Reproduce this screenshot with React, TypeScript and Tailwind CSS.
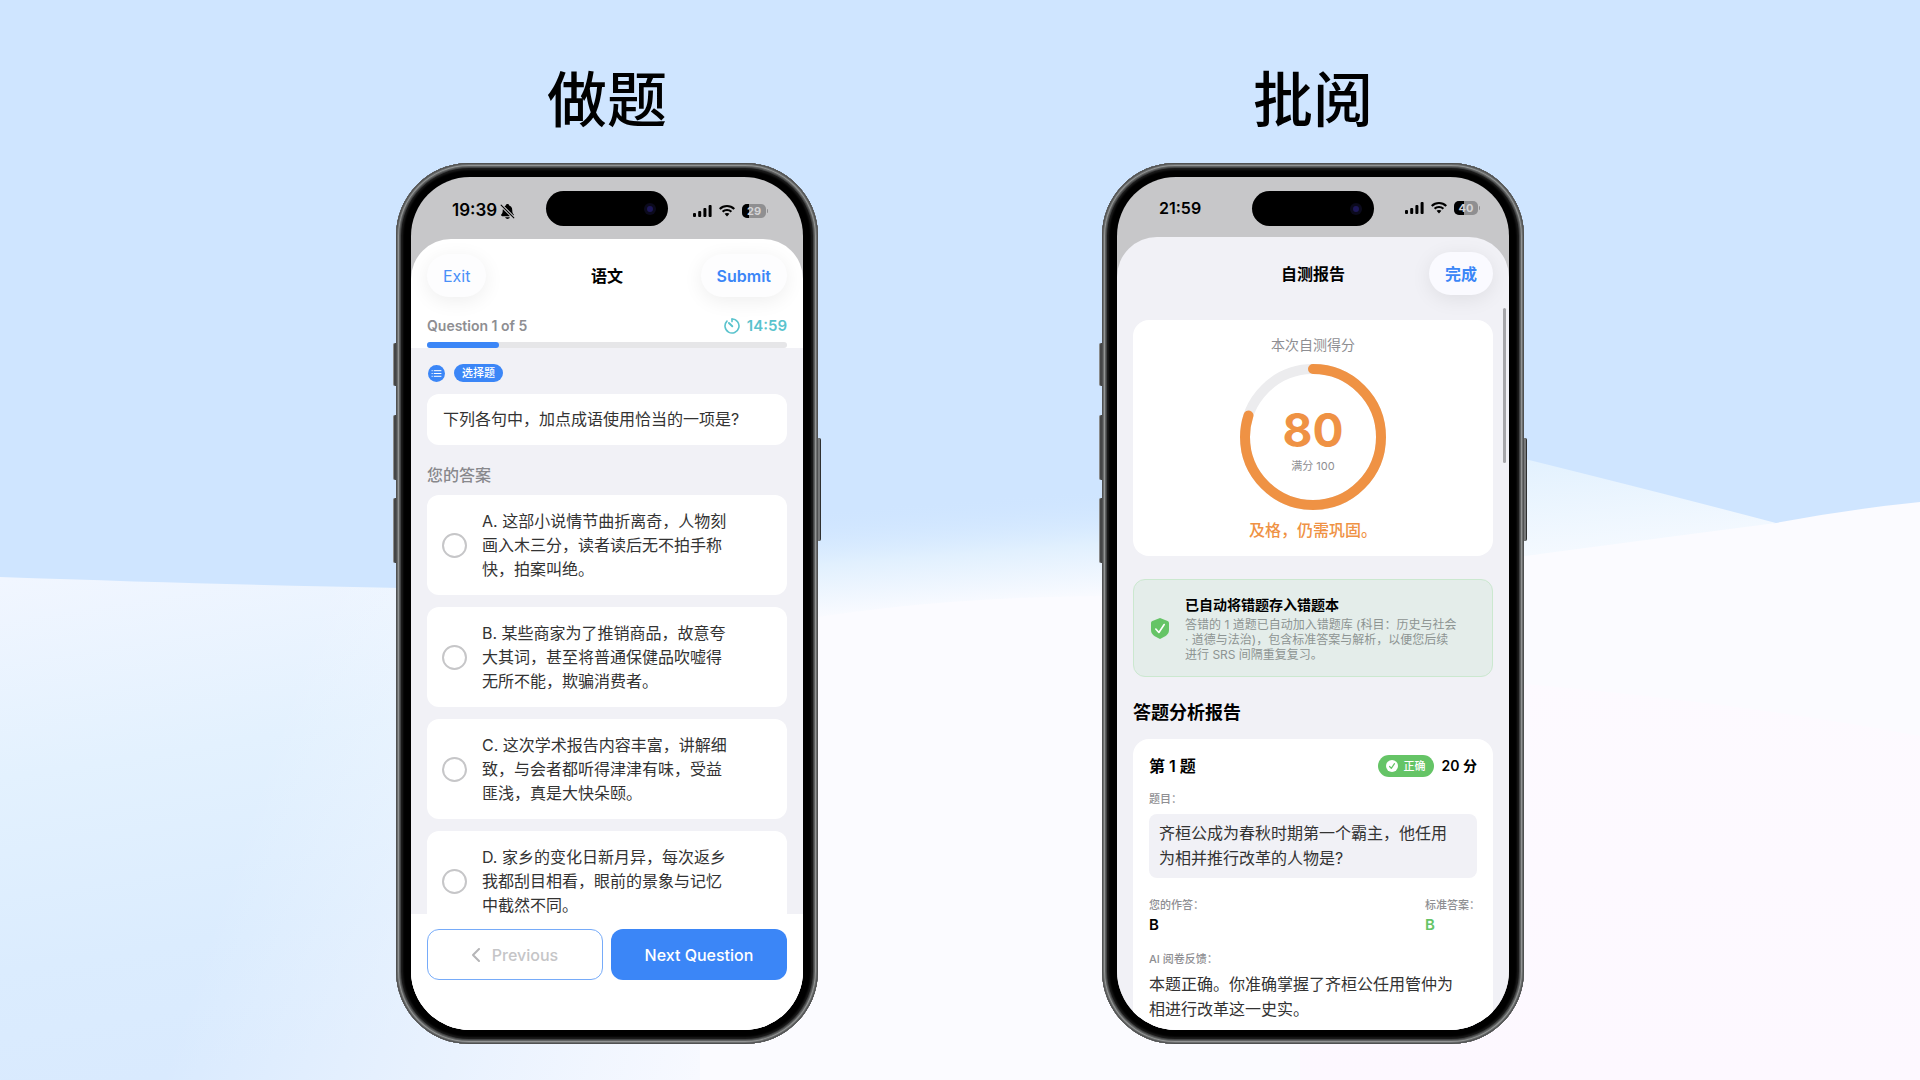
/**
 * Feature showcase
 *
 * Two phone mockups side by side: the quiz screen and the grading report.
 */

import type {ReactNode} from 'react';

import {clsx} from 'clsx';
import {IoNotificationsOff} from 'react-icons/io5';

/**
 * Answer option of a multiple choice question
 */
type Option = {
  readonly id: string;
  readonly text: string;
};

const QUESTION = '下列各句中，加点成语使用恰当的一项是?';

const OPTIONS: Option[] = [
  {id: 'A', text: '这部小说情节曲折离奇，人物刻画入木三分，读者读后无不拍手称快，拍案叫绝。'},
  {id: 'B', text: '某些商家为了推销商品，故意夸大其词，甚至将普通保健品吹嘘得无所不能，欺骗消费者。'},
  {id: 'C', text: '这次学术报告内容丰富，讲解细致，与会者都听得津津有味，受益匪浅，真是大快朵颐。'},
  {id: 'D', text: '家乡的变化日新月异，每次返乡我都刮目相看，眼前的景象与记忆中截然不同。'},
];

const RESULT = {score: 80, total: 100} as const;

const RING = {radius: 68, size: 146, stroke: 10} as const;

/**
 * Soft layered waves behind the phones
 */
const Backdrop = () => (
  <svg
    aria-hidden="true"
    className="absolute inset-0 -z-10 size-full"
    preserveAspectRatio="none"
    viewBox="0 0 1920 1080"
  >
    <defs>
      <linearGradient gradientUnits="userSpaceOnUse" id="left-wave" x1="60" x2="140" y1="570" y2="1080">
        <stop offset="0" stopColor="#f1f6ff" />
        <stop offset="0.38" stopColor="#e3f1fe" />
        <stop offset="0.75" stopColor="#dbecfe" />
        <stop offset="1" stopColor="#d9eafe" />
      </linearGradient>
      <linearGradient gradientUnits="userSpaceOnUse" id="left-fade" x1="250" x2="800" y1="800" y2="980">
        <stop offset="0" stopColor="#fbfbff" stopOpacity="0" />
        <stop offset="1" stopColor="#fbfbff" />
      </linearGradient>
      <linearGradient gradientUnits="userSpaceOnUse" id="mist" x1="960" x2="968" y1="500" y2="608">
        <stop offset="0" stopColor="#d0e6ff" stopOpacity="0" />
        <stop offset="0.5" stopColor="#e1f0fe" />
        <stop offset="1" stopColor="#fafbff" />
      </linearGradient>
      <linearGradient gradientUnits="userSpaceOnUse" id="right-wave" x1="1600" x2="1610" y1="450" y2="560">
        <stop offset="0" stopColor="#e2f1fe" />
        <stop offset="1" stopColor="#f6faff" />
      </linearGradient>
      <linearGradient gradientUnits="userSpaceOnUse" id="cream" x1="1500" x2="1500" y1="660" y2="1080">
        <stop offset="0" stopColor="#fdfaff" />
        <stop offset="1" stopColor="#fdf8ff" />
      </linearGradient>
    </defs>
    <rect fill="#cfe5ff" height="1080" width="1920" />
    <path d="M0 577 Q230 585 400 588 L820 590 V1080 H0Z" fill="url(#left-wave)" />
    <path d="M0 577 Q230 585 400 588 L820 590 V1080 H0Z" fill="url(#left-fade)" />
    <path d="M800 480 H1300 V640 H800Z" fill="url(#mist)" />
    <path d="M1300 420 L1525 459 Q1670 495 1776 523 L1525 600 H1300Z" fill="url(#right-wave)" />
    <path
      d="M700 640 Q880 597 1105 596 H1300 L1525 556 Q1660 538 1776 523 Q1850 509 1920 502 V1080 H700Z"
      fill="#fbfbff"
    />
    <path d="M1300 670 L1525 684 Q1750 704 1920 736 V1080 H1300Z" fill="url(#cream)" />
  </svg>
);

const SignalIcon = () => (
  <svg aria-hidden="true" className="h-3 w-[19px]" viewBox="0 0 19 12">
    <rect height="4" rx="1" width="3" x="0" y="8" />
    <rect height="6" rx="1" width="3" x="5.2" y="6" />
    <rect height="9" rx="1" width="3" x="10.4" y="3" />
    <rect height="12" rx="1" width="3" x="15.6" y="0" />
  </svg>
);

const WifiIcon = () => (
  <svg aria-hidden="true" className="h-3 w-4" viewBox="0 0 16 12">
    <path d="M8 0C4.900 0 2.100 1.200 0 3.150L1.500 4.650A9.500 9.500 0 0 1 14.500 4.650L16 3.150A11.700 11.700 0 0 0 8 0Z" />
    <path d="M8 4C6 4 4.200 4.750 2.850 6L4.350 7.500A5.400 5.400 0 0 1 11.650 7.500L13.150 6A7.600 7.600 0 0 0 8 4Z" />
    <path d="M8 7.900C7 7.900 6.200 8.250 5.550 8.800L8 11.500L10.450 8.800A3.600 3.600 0 0 0 8 7.900Z" />
  </svg>
);

/**
 * Battery with its level printed inside
 */
const Battery = ({level}: {level: number}) => (
  <div className="flex items-center gap-px">
    <div className="relative h-[14px] w-6 overflow-hidden rounded-[5px] bg-[#8f8f91]">
      <div className="h-full bg-black" style={{width: `${level}%`}} />
      <span className="absolute inset-0 text-center text-[11px] leading-[14px] font-bold text-[#d4d4d6]">{level}</span>
    </div>
    <div className="h-1 w-px rounded-r bg-[#8f8f91]" />
  </div>
);

type StatusBarProps = {
  className?: string;
  level: number;
  muted?: boolean;
  time: string;
};

const StatusBar = ({className, level, muted = false, time}: StatusBarProps) => (
  <div className={clsx('flex shrink-0 items-center justify-between text-black', className)}>
    <div className="flex items-center gap-0.5 font-semibold">
      <span>{time}</span>
      {muted && <IoNotificationsOff className="size-[17px]" />}
    </div>
    <div className="flex items-center gap-[7px]">
      <SignalIcon />
      <WifiIcon />
      <Battery level={level} />
    </div>
  </div>
);

/**
 * Phone body with side keys, bezel and camera island
 */
const Phone = ({children}: {children: ReactNode}) => (
  <div className="relative">
    <div className="absolute top-[180px] -left-[3px] h-[43px] w-2 rounded-[2px] border-l border-[#8b8c8c] bg-[#454647]" />
    <div className="absolute top-[252px] -left-[3px] h-[65px] w-2 rounded-[2px] border-l border-[#8b8c8c] bg-[#454647]" />
    <div className="absolute top-[335px] -left-[3px] h-[65px] w-2 rounded-[2px] border-l border-[#8b8c8c] bg-[#454647]" />
    <div className="absolute top-[275px] -right-[3px] h-[103px] w-2 rounded-[2px] border-r border-[#2f3030] bg-[#77797a]" />
    <div className="relative h-[881px] w-[422px] rounded-[73px] bg-black px-[15px] py-[14px] shadow-[inset_0_0_0_1px_#505152,inset_0_0_0_2px_#6c6e6e,inset_0_0_0_3px_#929494,inset_0_0_0_4px_#606262,inset_0_0_0_5px_#434445,inset_0_0_2px_7px_#1c1c1c]">
      <div className="relative flex h-full flex-col overflow-hidden rounded-[59px] bg-[#c7c7c9]">{children}</div>
      <div className="absolute top-7 left-1/2 flex h-[35px] w-[122px] -translate-x-1/2 items-center justify-end rounded-full bg-black pr-3">
        <div className="flex size-3 items-center justify-center rounded-full bg-[#0b0a1c]">
          <div className="size-1.5 rounded-full bg-[#1d1858]" />
        </div>
      </div>
    </div>
  </div>
);

const TimerIcon = () => (
  <svg aria-hidden="true" className="size-4" fill="none" stroke="currentColor" strokeLinecap="round" viewBox="0 0 16 16">
    <path d="M8 1 A7 7 0 1 1 3 3.100" strokeWidth="1.600" />
    <path d="M8 1 V3.600" strokeWidth="1.600" />
    <path d="M4.900 5 L8.300 8.300" strokeWidth="1.900" />
  </svg>
);

const ListBadgeIcon = () => (
  <svg aria-hidden="true" className="size-[17px]" viewBox="0 0 17 17">
    <circle cx="8.500" cy="8.500" fill="#3b86f7" r="8.500" />
    <path d="M6.200 5.700H13M6.200 8.500H13M6.200 11.300H13" stroke="#fff" strokeLinecap="round" />
    <path d="M4 5.700H4.300M4 8.500H4.300M4 11.300H4.300" stroke="#fff" strokeLinecap="round" />
  </svg>
);

/**
 * Single option row, the whole card toggles its radio
 */
const OptionCard = ({option}: {option: Option}) => (
  <label className="flex h-[100px] shrink-0 items-center gap-[15px] rounded-xl bg-white pr-[52px] pl-[15px]">
    <input
      className="size-[25px] shrink-0 appearance-none rounded-full border-2 border-[#c6c6c8] bg-white checked:border-8 checked:border-[#3b86f7]"
      name="answer"
      type="radio"
      value={option.id}
    />
    <span className="leading-6 text-[#333333]">{`${option.id}. ${option.text}`}</span>
  </label>
);

const QuizScreen = () => (
  <>
    <StatusBar className="h-[62px] pt-[6px] pr-[35px] pl-[41px] text-[17px]" level={29} muted time="19:39" />
    <div className="flex min-h-0 flex-1 flex-col overflow-hidden rounded-t-[40px] bg-white">
      <header className="px-4 pt-[15px]">
        <div className="grid grid-cols-[1fr_auto_1fr] items-center">
          <button
            className="h-[43px] justify-self-start rounded-full bg-[#fdfdfe] px-4 text-[#4a90f8] shadow-[0_4px_20px_rgba(0,0,0,0.07)]"
            type="button"
          >
            Exit
          </button>
          <h2 className="font-semibold text-black">语文</h2>
          <button
            className="h-[43px] justify-self-end rounded-full bg-[#fdfdfe] px-4 font-semibold text-[#3b86f7] shadow-[0_4px_20px_rgba(0,0,0,0.07)]"
            type="button"
          >
            Submit
          </button>
        </div>
        <div className="mt-[19px] flex h-5 items-center justify-between font-semibold">
          <span className="text-sm text-[#8e8e92]">Question 1 of 5</span>
          <span className="flex items-center gap-[7px] text-[15px] text-[#5ac3cd]">
            <TimerIcon />
            14:59
          </span>
        </div>
        <div className="mt-[6px] h-[6px] rounded-full bg-[#e6e6e8]">
          <div className="h-full w-1/5 rounded-full bg-[#3b86f7]" />
        </div>
      </header>

      <main className="flex min-h-0 flex-1 flex-col overflow-hidden bg-[#f1f1f6] px-4 pt-4">
        <div className="flex h-[18px] shrink-0 items-center gap-[9px] pl-px">
          <ListBadgeIcon />
          <span className="rounded-full bg-[#3b86f7] px-2 text-[11px] leading-[18px] font-medium text-white">选择题</span>
        </div>
        <p className="mt-3 shrink-0 rounded-xl bg-white px-4 py-[13px] leading-[25px] text-[#333333]">{QUESTION}</p>
        <h3 className="mt-[18px] mb-2 shrink-0 leading-6 font-medium text-[#88888c]">您的答案</h3>
        <div className="flex flex-col gap-3">
          {OPTIONS.map(option => (
            <OptionCard key={option.id} option={option} />
          ))}
        </div>
      </main>

      <footer className="grid h-[116px] shrink-0 grid-cols-2 items-start gap-2 bg-white px-4 pt-[15px]">
        <button
          className="flex h-[51px] items-center justify-center gap-3 rounded-xl border border-[#76abf9] font-medium text-[#c5c5c7]"
          disabled
          type="button"
        >
          <svg aria-hidden="true" className="h-[14px] w-2" fill="none" viewBox="0 0 8 14">
            <path d="M7 1 L1 7 L7 13" stroke="#b5b5b7" strokeLinecap="round" strokeLinejoin="round" strokeWidth="2" />
          </svg>
          Previous
        </button>
        <button className="h-[51px] rounded-xl bg-[#3b86f7] font-medium text-white" type="button">
          Next Question
        </button>
      </footer>
    </div>
  </>
);

/**
 * Score ring, starts at twelve o'clock and runs clockwise
 */
const ScoreRing = () => {
  const circumference = 2 * Math.PI * RING.radius;
  const offset = circumference * (1 - RESULT.score / RESULT.total);
  const center = RING.size / 2;

  return (
    <div className="relative mt-[10px] size-[146px]">
      <svg className="size-full -rotate-90" fill="none" viewBox={`0 0 ${RING.size} ${RING.size}`}>
        <circle cx={center} cy={center} r={RING.radius} stroke="#ececee" strokeWidth={RING.stroke} />
        <circle
          cx={center}
          cy={center}
          r={RING.radius}
          stroke="#ef9244"
          strokeDasharray={circumference}
          strokeDashoffset={offset}
          strokeLinecap="round"
          strokeWidth={RING.stroke}
        />
      </svg>
      <div className="absolute inset-0 flex flex-col items-center pt-[42px]">
        <span className="text-[46px] leading-[48px] font-bold text-[#ef9244]">{RESULT.score}</span>
        <span className="mt-1 text-[11px] leading-4 text-[#8e8e92]">{`满分 ${RESULT.total}`}</span>
      </div>
    </div>
  );
};

const ReportScreen = () => (
  <>
    <StatusBar className="h-[60px] pt-0.5 pr-[29px] pl-[42px] text-base" level={40} time="21:59" />
    <div className="relative min-h-0 flex-1 overflow-hidden rounded-t-[40px] bg-[#f1f1f6] px-4">
      <header className="grid grid-cols-[1fr_auto_1fr] items-center pt-[15px]">
        <h2 className="col-start-2 font-semibold text-black">自测报告</h2>
        <button
          className="h-[43px] justify-self-end rounded-full bg-[#fafaff] px-4 font-semibold text-[#3b86f7] shadow-[0_4px_20px_rgba(0,0,0,0.08)]"
          type="button"
        >
          完成
        </button>
      </header>

      <section className="mt-[25px] flex flex-col items-center rounded-2xl bg-white pt-4 pb-[14px]">
        <h3 className="text-sm leading-[18px] text-[#8e8e92]">本次自测得分</h3>
        <ScoreRing />
        <p className="mt-2 leading-6 font-medium text-[#ef9244]">及格，仍需巩固。</p>
      </section>

      <section className="mt-[23px] flex h-[98px] items-center gap-4 rounded-xl border border-[#cbe8cf] bg-[#e4edea] pr-4 pl-[17px]">
        <svg aria-hidden="true" className="h-[21px] w-[18px] shrink-0" fill="none" viewBox="0 0 18 21">
          <path
            d="M9 0 L16.600 2.900 Q18 3.500 18 4.900 V12 C18 16.500 14.500 18.300 9 21 C3.500 18.300 0 16.500 0 12 V4.900 Q0 3.500 1.400 2.900Z"
            fill="#65c466"
          />
          <path d="M4.800 11 L7.900 14.500 L13.200 6.500" stroke="#fff" strokeLinecap="round" strokeLinejoin="round" strokeWidth="1.600" />
        </svg>
        <div>
          <h3 className="text-sm leading-5 font-semibold text-black">已自动将错题存入错题本</h3>
          <p className="mt-0.5 text-xs leading-[15px] text-[#8d9492]">
            答错的 1 道题已自动加入错题库 (科目：历史与社会
            <br />· 道德与法治)，包含标准答案与解析，以便您后续
            <br />
            进行 SRS 间隔重复复习。
          </p>
        </div>
      </section>

      <h3 className="mt-6 mb-[14px] text-lg leading-6 font-bold text-black">答题分析报告</h3>

      <article className="rounded-2xl bg-white p-4">
        <div className="flex h-[22px] items-center gap-2 text-black">
          <h4 className="mr-auto font-semibold">第 1 题</h4>
          <span className="flex h-[22px] items-center gap-[6px] rounded-full bg-[#65c466] px-2 text-[11px] font-medium text-white">
            <svg aria-hidden="true" className="size-3" fill="none" viewBox="0 0 12 12">
              <circle cx="6" cy="6" fill="#fff" r="6" />
              <path d="M3.600 6.500 L5.300 8.400 L8.500 3.700" stroke="#65c466" strokeLinecap="round" strokeLinejoin="round" strokeWidth="1.200" />
            </svg>
            正确
          </span>
          <span className="text-sm font-semibold">20 分</span>
        </div>
        <p className="mt-[14px] text-[11px] leading-4 font-medium text-[#8e8e92]">题目：</p>
        <p className="mt-[7px] rounded-lg bg-[#f1f1f6] py-[7px] pr-4 pl-[10px] leading-[25px] text-[#333333]">
          齐桓公成为春秋时期第一个霸主，他任用为相并推行改革的人物是?
        </p>
        <dl className="mt-[19px] flex justify-between">
          <div>
            <dt className="text-[11px] leading-4 font-medium text-[#8e8e92]">您的作答：</dt>
            <dd className="mt-0.5 text-[15px] leading-5 font-semibold text-black">B</dd>
          </div>
          <div className="w-[52px]">
            <dt className="text-[11px] leading-4 font-medium whitespace-nowrap text-[#8e8e92]">标准答案：</dt>
            <dd className="mt-0.5 text-[15px] leading-5 font-semibold text-[#65c466]">B</dd>
          </div>
        </dl>
        <p className="mt-4 text-[11px] leading-4 font-medium text-[#8e8e92]">AI 阅卷反馈：</p>
        <p className="mt-[5px] pr-3 leading-[25px] text-[#333333]">本题正确。你准确掌握了齐桓公任用管仲为相进行改革这一史实。</p>
      </article>

      {/* Scroll indicator */}
      <div className="absolute top-[71px] right-[3px] h-[155px] w-[3px] rounded-full bg-[#a6a6aa]" />
    </div>
  </>
);

type ShowcaseProps = {
  children: ReactNode;
  title: string;
};

const Showcase = ({children, title}: ShowcaseProps) => (
  <section className="flex flex-col items-center">
    <h1 className="mb-[27px] text-[60px] leading-[72px] font-medium text-black">{title}</h1>
    <Phone>{children}</Phone>
  </section>
);

export default function App() {
  return (
    <div
      className="relative isolate flex min-h-screen flex-wrap justify-center gap-x-[284px] gap-y-16 overflow-hidden pt-16 font-['Inter','Noto_Sans_CJK_SC',sans-serif]"
      lang="zh-CN"
    >
      <Backdrop />
      <Showcase title="做题">
        <QuizScreen />
      </Showcase>
      <Showcase title="批阅">
        <ReportScreen />
      </Showcase>
    </div>
  );
}
